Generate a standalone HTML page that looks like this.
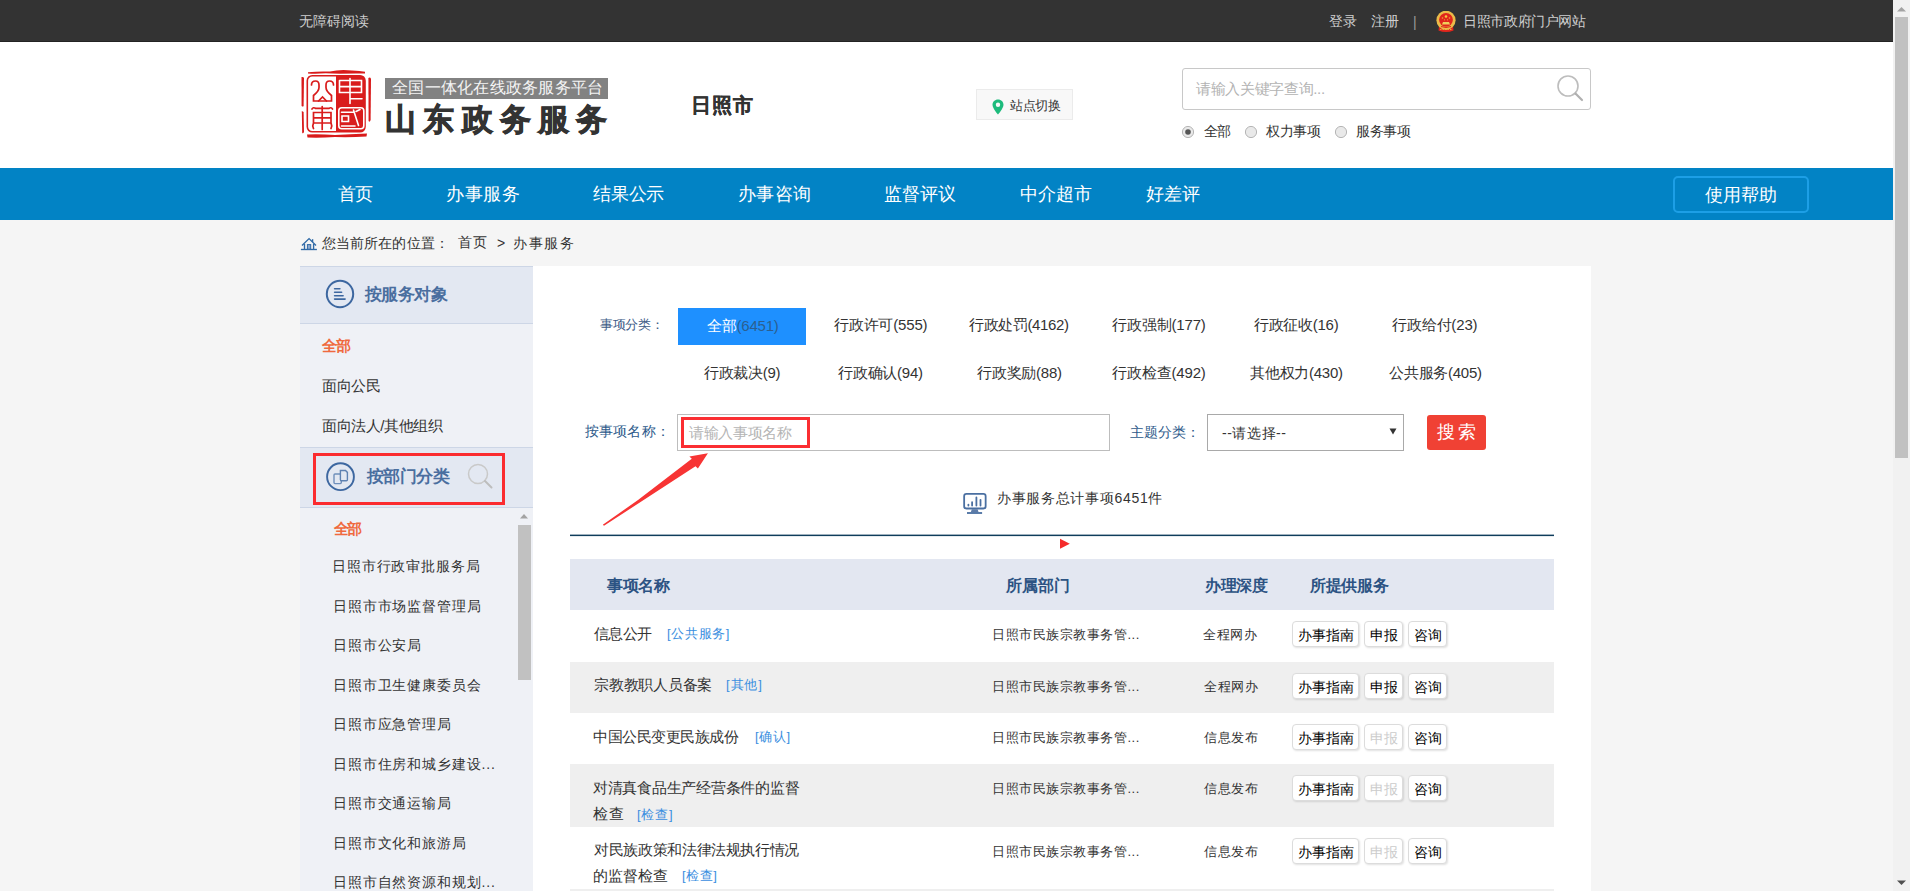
<!DOCTYPE html>
<html><head><meta charset="utf-8"><title>山东政务服务</title>
<style>
*{margin:0;padding:0;box-sizing:border-box}
html,body{width:1910px;height:891px;overflow:hidden;background:#f5f5f5}
body{font-family:"Liberation Sans",sans-serif;font-size:14px;color:#333;position:relative}
.b{position:absolute}
.t{position:absolute;white-space:nowrap;line-height:1}
.c{text-align:center}
.btn{position:absolute;height:26px;border:1px solid #dcdcdc;border-radius:4px;background:#fff;box-shadow:1px 1px 2px rgba(0,0,0,.12);font-size:14px;line-height:26px;text-align:center;white-space:nowrap}
</style></head><body>
<div class="b" style="left:0px;top:0px;width:1893px;height:42px;background:#333;border-bottom:1px solid #232323"></div>
<div class="b" style="left:0px;top:42px;width:1893px;height:126px;background:#fff"></div>
<div class="b" style="left:0px;top:168px;width:1893px;height:52px;background:#0283c5"></div>
<div class="t" style="left:299px;top:14px;font-size:14px;color:#cfcfcf;font-weight:normal;letter-spacing:0.0px;">无障碍阅读</div>
<div class="t" style="left:1329px;top:14px;font-size:14px;color:#cfcfcf;font-weight:normal;letter-spacing:-0.3px;">登录</div>
<div class="t" style="left:1371px;top:14px;font-size:14px;color:#cfcfcf;font-weight:normal;letter-spacing:0.4px;">注册</div>
<div class="t" style="left:1413px;top:15px;font-size:14px;color:#9a9a9a;font-weight:normal;">|</div>
<div class="t" style="left:1463px;top:14px;font-size:14px;color:#cfcfcf;font-weight:normal;letter-spacing:-0.375px;">日照市政府门户网站</div>
<svg class="b" style="left:1436px;top:10.6px" width="21" height="22" viewBox="0 0 21 22">
<path d="M3 15 Q10 20.5 17 15 L17.5 19.5 Q10 22.5 2.5 19.5Z" fill="#e0261c"/>
<path d="M4 18.5 H16" stroke="#f0c040" stroke-width=".8" stroke-dasharray="1.5 1"/>
<circle cx="10" cy="9.3" r="9.6" fill="#ecbb48"/><circle cx="10" cy="8.8" r="6.9" fill="#e0261c"/>
<path d="M6 13.5 L7 11 H13 L14 13.5Z" fill="#f0cf5a"/><path d="M5 15.5 Q10 17.5 15 15.5" stroke="#e0261c" stroke-width="1" fill="none"/>
<circle cx="10" cy="5.5" r="1.3" fill="#f5c840"/><circle cx="6.5" cy="7" r=".8" fill="#f0a838"/><circle cx="13.5" cy="7" r=".8" fill="#f0a838"/><circle cx="8.5" cy="8.8" r=".6" fill="#f0a838"/><circle cx="11.5" cy="8.8" r=".6" fill="#f0a838"/></svg>
<svg class="b" style="left:300px;top:68px" width="72" height="72" viewBox="0 0 72 72">
<g fill="#d91a1a">
<path d="M8 4.2 Q20 3 30 3.6 Q40 1.2 52 2.6 Q60 3 65 3.8 L65 5.6 Q50 5.4 40 5.8 Q28 5 20 5.4 Q12 5.8 8 5.6Z"/>
<path d="M1.5 9 Q3.5 8.5 4 10 L3.6 38 Q2.8 39 1.6 38Z"/><path d="M1.8 43 L3.6 44 L4 64 Q3 66 2.2 65Z"/>
<path d="M68.4 10 Q70 9 71 10.5 L70.6 52 Q69.6 55 68.6 53Z"/>
<path d="M7 66.5 Q20 66 35 67 Q50 66 67 65.5 L66.5 68.5 Q50 69.5 35 69 Q20 70 7.5 69.5Z"/>
</g>
<rect x="7.3" y="7.7" width="57.7" height="56.1" rx="5" fill="#fff" stroke="#d91c1c" stroke-width="1.6"/>
<path d="M36 7.7 H60 Q65 7.7 65 12.7 V58.8 Q65 63.8 60 63.8 H36 Z" fill="#d91c1c"/>
<g fill="none" stroke="#d91c1c" stroke-width="1.7" stroke-linecap="round">
<path d="M11.5 17 Q11.5 13 15.5 13 Q19 13 19 17 V19.5 Q19 23 13.5 27.5 V33 H31.5 V27.5 Q26 23 26 19.5 V17 Q26 13 29.5 13 Q33.5 13 33.5 17"/>
<path d="M18.5 33 L22.5 29 L26.5 33"/>
<path d="M12 41 Q13.5 38.8 15.5 40.4 H29 Q31 38.8 32.5 41"/>
<path d="M13.5 44.5 H31 V55 H13.5 Z M13.5 49.8 H31 M22.2 38.5 V61.5 M13.5 55 Q12 58 13.5 60.5 M31 55 Q32.5 58 31 60.5"/>
</g>
<g fill="none" stroke="#fff" stroke-width="1.6" stroke-linecap="round">
<path d="M39.5 12.5 V24.5 H61.5 V12.5 H39.5 M39.5 18.6 H61.5 M50 10.5 V35.5 M50 30.7 H62"/>
<rect x="38.8" y="39.8" width="25" height="21" rx="3"/>
<path d="M41.5 44.2 H53 M42 48 H48.5 V53.5 H42 Z M53.5 42 L58.5 57.5 M56 43.5 L60 41.5 M41.5 58 H55"/>
</g></svg>
<div class="b" style="left:385px;top:78px;width:223px;height:21px;background:#828282"></div>
<div class="t" style="left:392px;top:80px;font-size:16px;color:#f4f4f4;font-weight:normal;letter-spacing:0.25px;">全国一体化在线政务服务平台</div>
<div class="t" style="left:385px;top:104px;font-size:31px;color:#333;font-weight:bold;letter-spacing:7.3px;-webkit-text-stroke:0.8px #333;">山东政务服务</div>
<div class="t" style="left:691px;top:95px;font-size:20px;color:#333;font-weight:bold;letter-spacing:1.0px;-webkit-text-stroke:0.3px #333;">日照市</div>
<div class="b" style="left:976px;top:89px;width:97px;height:31px;background:#f8f8f8;border:1px solid #ebebeb"></div>
<svg class="b" style="left:991.5px;top:98.7px" width="12" height="16" viewBox="0 0 12 16"><path d="M6 0.5 C2.8 .5 .5 2.9 .5 5.8 C.5 9.6 6 15.5 6 15.5 C6 15.5 11.5 9.6 11.5 5.8 C11.5 2.9 9.2 .5 6 .5Z M6 3.6 A2.2 2.2 0 1 1 6 8 A2.2 2.2 0 1 1 6 3.6Z" fill="#1dbb7c" fill-rule="evenodd"/></svg>
<div class="t" style="left:1010px;top:99px;font-size:13px;color:#333;font-weight:normal;letter-spacing:-0.267px;">站点切换</div>
<div class="b" style="left:1182px;top:68px;width:409px;height:42px;background:#fff;border:1px solid #c8c8c8;border-radius:3px"></div>
<div class="t" style="left:1196px;top:81px;font-size:15px;color:#b3b3b3;font-weight:normal;letter-spacing:-0.34px;">请输入关键字查询...</div>
<svg class="b" style="left:1555px;top:73px" width="30" height="30" viewBox="0 0 30 30"><circle cx="13" cy="13" r="10" fill="none" stroke="#bdbdbd" stroke-width="1.6"/><path d="M20.5 20.5 L27 27" stroke="#b0b0b0" stroke-width="2.2" stroke-linecap="round"/></svg>
<svg class="b" style="left:1181px;top:125px" width="14" height="14" viewBox="0 0 14 14"><circle cx="7" cy="7" r="5.6" fill="#e9e9e9" stroke="#b5b5b5" stroke-width="1"/><circle cx="7" cy="7" r="2.8" fill="#555"/></svg>
<div class="t" style="left:1204px;top:124px;font-size:14px;color:#333;font-weight:normal;letter-spacing:-1.0px;">全部</div>
<svg class="b" style="left:1244px;top:125px" width="14" height="14" viewBox="0 0 14 14"><circle cx="7" cy="7" r="5.6" fill="#e9e9e9" stroke="#b5b5b5" stroke-width="1"/></svg>
<div class="t" style="left:1266px;top:124px;font-size:14px;color:#333;font-weight:normal;letter-spacing:-0.4px;">权力事项</div>
<svg class="b" style="left:1334px;top:125px" width="14" height="14" viewBox="0 0 14 14"><circle cx="7" cy="7" r="5.6" fill="#e9e9e9" stroke="#b5b5b5" stroke-width="1"/></svg>
<div class="t" style="left:1356px;top:124px;font-size:14px;color:#333;font-weight:normal;letter-spacing:-0.267px;">服务事项</div>
<div class="t" style="left:338px;top:185px;font-size:18px;color:#fff;font-weight:normal;letter-spacing:-0.7px;">首页</div>
<div class="t" style="left:446px;top:185px;font-size:18px;color:#fff;font-weight:normal;letter-spacing:0.567px;">办事服务</div>
<div class="t" style="left:593px;top:185px;font-size:18px;color:#fff;font-weight:normal;letter-spacing:-0.2px;">结果公示</div>
<div class="t" style="left:738px;top:185px;font-size:18px;color:#fff;font-weight:normal;letter-spacing:0.4px;">办事咨询</div>
<div class="t" style="left:884px;top:185px;font-size:18px;color:#fff;font-weight:normal;letter-spacing:0.067px;">监督评议</div>
<div class="t" style="left:1020px;top:185px;font-size:18px;color:#fff;font-weight:normal;letter-spacing:-0.1px;">中介超市</div>
<div class="t" style="left:1146px;top:185px;font-size:18px;color:#fff;font-weight:normal;letter-spacing:0.0px;">好差评</div>
<div class="b" style="left:1673px;top:176px;width:136px;height:37px;border:2px solid #1d9fe6;border-radius:5px"></div>
<div class="t" style="left:1705px;top:186px;font-size:18px;color:#fff;font-weight:normal;letter-spacing:0.0px;">使用帮助</div>
<svg class="b" style="left:296px;top:230px" width="26" height="24" viewBox="0 0 26 24"><g fill="none" stroke="#2f69a6" stroke-width="1.35"><path d="M6 15.6 L13.06 8.6 L20 15.6"/><path d="M16.6 9.2 V12"/><path d="M8.5 14 V19 M17.6 14 V19"/><path d="M4.9 19.5 H20.9"/></g><rect x="11.4" y="14.6" width="3.3" height="4.6" fill="#8eaad0" stroke="#2f69a6" stroke-width="1"/></svg>
<div class="t" style="left:322px;top:236px;font-size:14px;color:#333;font-weight:normal;letter-spacing:0.087px;">您当前所在的位置：</div>
<div class="t" style="left:458px;top:235px;font-size:14px;color:#333;font-weight:normal;letter-spacing:1.0px;">首页</div>
<div class="t" style="left:497px;top:236px;font-size:14px;color:#333;font-weight:normal;">&gt;</div>
<div class="t" style="left:513px;top:236px;font-size:14px;color:#333;font-weight:normal;letter-spacing:1.5px;">办事服务</div>
<div class="b" style="left:300px;top:266px;width:233px;height:625px;background:#eff1f6"></div>
<div class="b" style="left:300px;top:266px;width:233px;height:58px;background:#e3e8f2;border-top:1px solid #cdd6e6;border-bottom:1px solid #cdd6e6"></div>
<svg class="b" style="left:325px;top:279px" width="30" height="30" viewBox="0 0 30 30"><circle cx="15" cy="15" r="13.2" fill="none" stroke="#3d67a0" stroke-width="2"/><path d="M9.6 9.8 H14.9 M9.6 13.2 H16.6 M9.6 16.7 H18.1 M9.6 20.1 H20.1" stroke="#3d67a0" stroke-width="1.6" stroke-linecap="round"/></svg>
<div class="t" style="left:365px;top:286px;font-size:17px;color:#4a6e9f;font-weight:bold;letter-spacing:-0.6px;">按服务对象</div>
<div class="t" style="left:322px;top:338px;font-size:15px;color:#ef6a3e;font-weight:bold;letter-spacing:-1.2px;">全部</div>
<div class="t" style="left:322px;top:378px;font-size:15px;color:#333;font-weight:normal;letter-spacing:-0.5px;">面向公民</div>
<div class="t" style="left:322px;top:418px;font-size:15px;color:#333;font-weight:normal;letter-spacing:-0.438px;">面向法人/其他组织</div>
<div class="b" style="left:300px;top:447px;width:233px;height:61px;background:#e3e8f2;border-top:1px solid #cdd6e6;border-bottom:1px solid #cdd6e6"></div>
<svg class="b" style="left:325px;top:462px" width="30" height="30" viewBox="0 0 30 30"><circle cx="15.5" cy="14.7" r="13.4" fill="none" stroke="#3d67a0" stroke-width="1.9"/><rect x="9" y="12" width="7.3" height="9.6" rx="1" fill="none" stroke="#6f8fbb" stroke-width="1.4"/><path d="M15.4 8.5 H20.5 L22.4 10.4 V17.8 Q22.4 18.8 21.4 18.8 H16.4 Q15.4 18.8 15.4 17.8 Z" fill="#e3e8f2" stroke="#5f82b2" stroke-width="1.4"/></svg>
<div class="t" style="left:367px;top:468px;font-size:17px;color:#4a6e9f;font-weight:bold;letter-spacing:-0.55px;">按部门分类</div>
<svg class="b" style="left:466px;top:462px" width="28" height="28" viewBox="0 0 28 28"><circle cx="12" cy="12" r="9.5" fill="none" stroke="#c9c9c9" stroke-width="1.5"/><path d="M19 19 L25.5 25.5" stroke="#bdbdbd" stroke-width="2" stroke-linecap="round"/></svg>
<div class="b" style="left:313px;top:453px;width:192px;height:52px;border:3px solid #fb2b2f"></div>
<div class="t" style="left:334px;top:521px;font-size:15px;color:#ef6a3e;font-weight:bold;letter-spacing:-1.7px;">全部</div>
<div class="t" style="left:332px;top:559px;font-size:14px;color:#333;font-weight:normal;letter-spacing:0.856px;">日照市行政审批服务局</div>
<div class="t" style="left:333px;top:599px;font-size:14px;color:#333;font-weight:normal;letter-spacing:0.856px;">日照市市场监督管理局</div>
<div class="t" style="left:333px;top:638px;font-size:14px;color:#333;font-weight:normal;letter-spacing:0.856px;">日照市公安局</div>
<div class="t" style="left:333px;top:678px;font-size:14px;color:#333;font-weight:normal;letter-spacing:0.856px;">日照市卫生健康委员会</div>
<div class="t" style="left:333px;top:717px;font-size:14px;color:#333;font-weight:normal;letter-spacing:0.856px;">日照市应急管理局</div>
<div class="t" style="left:333px;top:757px;font-size:14px;color:#333;font-weight:normal;letter-spacing:0.856px;">日照市住房和城乡建设...</div>
<div class="t" style="left:333px;top:796px;font-size:14px;color:#333;font-weight:normal;letter-spacing:0.856px;">日照市交通运输局</div>
<div class="t" style="left:333px;top:836px;font-size:14px;color:#333;font-weight:normal;letter-spacing:0.856px;">日照市文化和旅游局</div>
<div class="t" style="left:333px;top:875px;font-size:14px;color:#333;font-weight:normal;letter-spacing:0.856px;">日照市自然资源和规划...</div>
<div class="b" style="left:516px;top:508px;width:17px;height:383px;background:#eff1f6"></div>
<svg class="b" style="left:519px;top:513px" width="10" height="6" viewBox="0 0 10 6"><path d="M1 5.5 L5 1 L9 5.5Z" fill="#a3a3a3"/></svg>
<div class="b" style="left:518px;top:525px;width:13px;height:155px;background:#c1c1c1"></div>
<div class="b" style="left:533px;top:266px;width:1058px;height:625px;background:#fff"></div>
<div class="t" style="left:600px;top:318px;font-size:13px;color:#3d5b86;font-weight:normal;letter-spacing:-0.325px;">事项分类：</div>
<div class="b" style="left:678px;top:308px;width:128px;height:37px;background:#1e90ff"></div>
<div class="t" style="left:707px;top:318px;font-size:15px;color:#333;font-weight:normal;letter-spacing:-0.229px;"><span style="color:#fff">全部</span><span style="color:#2c5f90">(6451)</span></div>
<div class="t" style="left:834px;top:317px;font-size:15px;color:#333;font-weight:normal;letter-spacing:-0.175px;">行政许可(555)</div>
<div class="t" style="left:969px;top:317px;font-size:15px;color:#333;font-weight:normal;letter-spacing:-0.378px;">行政处罚(4162)</div>
<div class="t" style="left:1112px;top:317px;font-size:15px;color:#333;font-weight:normal;letter-spacing:-0.15px;">行政强制(177)</div>
<div class="t" style="left:1254px;top:317px;font-size:15px;color:#333;font-weight:normal;letter-spacing:-0.286px;">行政征收(16)</div>
<div class="t" style="left:1392px;top:317px;font-size:15px;color:#333;font-weight:normal;letter-spacing:-0.157px;">行政给付(23)</div>
<div class="t" style="left:704px;top:365px;font-size:15px;color:#333;font-weight:normal;letter-spacing:-0.317px;">行政裁决(9)</div>
<div class="t" style="left:838px;top:365px;font-size:15px;color:#333;font-weight:normal;letter-spacing:-0.243px;">行政确认(94)</div>
<div class="t" style="left:977px;top:365px;font-size:15px;color:#333;font-weight:normal;letter-spacing:-0.243px;">行政奖励(88)</div>
<div class="t" style="left:1112px;top:365px;font-size:15px;color:#333;font-weight:normal;letter-spacing:-0.15px;">行政检查(492)</div>
<div class="t" style="left:1250px;top:365px;font-size:15px;color:#333;font-weight:normal;letter-spacing:-0.25px;">其他权力(430)</div>
<div class="t" style="left:1389px;top:365px;font-size:15px;color:#333;font-weight:normal;letter-spacing:-0.25px;">公共服务(405)</div>
<div class="t" style="left:585px;top:424px;font-size:14px;color:#2d5a8a;font-weight:normal;letter-spacing:0.16px;">按事项名称：</div>
<div class="b" style="left:677px;top:414px;width:433px;height:37px;border:1px solid #bdbdbd"></div>
<div class="t" style="left:689px;top:425px;font-size:15px;color:#b5b5b5;font-weight:normal;letter-spacing:-0.35px;">请输入事项名称</div>
<div class="b" style="left:681px;top:417px;width:129px;height:31px;border:3px solid #fb2e32"></div>
<svg class="b" style="left:560px;top:440px" width="160" height="100" viewBox="560 440 160 100"><path d="M602.8 524.8 L638 500 L691.8 458.7 L689.4 456.4 L707.9 453.2 L697.9 468.6 L695.5 466.2 L604 525.8 Z" fill="#f73434"/></svg>
<div class="t" style="left:1130px;top:425px;font-size:14px;color:#2d5a8a;font-weight:normal;letter-spacing:0.075px;">主题分类：</div>
<div class="b" style="left:1207px;top:414px;width:197px;height:37px;border:1px solid #a9a9a9;background:#fff"></div>
<div class="t" style="left:1222px;top:426px;font-size:14px;color:#333;font-weight:normal;letter-spacing:0.55px;">--请选择--</div>
<svg class="b" style="left:1389px;top:428px" width="8" height="7" viewBox="0 0 8 7"><path d="M.5 .5 H7.5 L4 6.5Z" fill="#333"/></svg>
<div class="b" style="left:1427px;top:415px;width:59px;height:35px;background:#f04134;border-radius:3px"></div>
<div class="t" style="left:1437px;top:423px;font-size:18px;color:#fff;font-weight:normal;letter-spacing:0.3px;">搜</div>
<div class="t" style="left:1458px;top:423px;font-size:18px;color:#fff;font-weight:normal;letter-spacing:0.5px;">索</div>
<svg class="b" style="left:955px;top:485px" width="40" height="35" viewBox="0 0 40 35"><rect x="9.15" y="8.9" width="21.5" height="14.6" rx="2.3" fill="none" stroke="#4a6fa1" stroke-width="1.8"/><g stroke="#4a6fa1" stroke-width="1.8" stroke-linecap="round"><path d="M13.4 19.6 V20.6 M17.1 17.2 V20.6 M21.4 12.5 V20.6 M25.5 14.8 V20.6"/></g><path d="M16.8 24.2 H22.6 L23.6 27.3 H15.8Z" fill="#5d7ba8"/><rect x="12" y="27.1" width="15.1" height="1.8" fill="#4a6fa1"/></svg>
<div class="t" style="left:997px;top:491px;font-size:14px;color:#333;font-weight:normal;letter-spacing:0.692px;">办事服务总计事项6451件</div>
<svg class="b" style="left:570px;top:530px" width="984" height="10"><rect x="0" y="4.6" width="984" height="1.5" fill="#0f3d5c"/></svg>
<svg class="b" style="left:1059px;top:538px" width="12" height="12" viewBox="0 0 12 12"><path d="M1 .8 L10.8 5.8 L1 10.8Z" fill="#f52b2b"/></svg>
<div class="b" style="left:570px;top:559px;width:984px;height:51px;background:#e3e7f1"></div>
<div class="t" style="left:607px;top:578px;font-size:16px;color:#2c5383;font-weight:bold;letter-spacing:-0.367px;">事项名称</div>
<div class="t" style="left:1006px;top:578px;font-size:16px;color:#2c5383;font-weight:bold;letter-spacing:-0.033px;">所属部门</div>
<div class="t" style="left:1205px;top:578px;font-size:16px;color:#2c5383;font-weight:bold;letter-spacing:-0.433px;">办理深度</div>
<div class="t" style="left:1310px;top:578px;font-size:16px;color:#2c5383;font-weight:bold;letter-spacing:-0.325px;">所提供服务</div>
<div class="b" style="left:570px;top:610px;width:984px;height:52px;background:#fff"></div>
<div class="t" style="left:594px;top:626px;font-size:15px;color:#333;font-weight:normal;letter-spacing:-0.533px;">信息公开</div>
<div class="t" style="left:667px;top:627px;font-size:13px;color:#3a8ee0;font-weight:normal;letter-spacing:0.64px;">[公共服务]</div>
<div class="t" style="left:992px;top:628px;font-size:13px;color:#333;font-weight:normal;letter-spacing:0.542px;">日照市民族宗教事务管...</div>
<div class="t" style="left:1203px;top:628px;font-size:13px;color:#333;font-weight:normal;letter-spacing:0.633px;">全程网办</div>
<div class="btn" style="left:1292px;top:621px;width:67px;color:#000">办事指南</div>
<div class="btn" style="left:1364px;top:621px;width:39px;color:#000">申报</div>
<div class="btn" style="left:1408px;top:621px;width:39px;color:#000">咨询</div>
<div class="b" style="left:570px;top:662px;width:984px;height:51px;background:#efefef"></div>
<div class="t" style="left:594px;top:677px;font-size:15px;color:#333;font-weight:normal;letter-spacing:-0.229px;">宗教教职人员备案</div>
<div class="t" style="left:726px;top:678px;font-size:13px;color:#3a8ee0;font-weight:normal;letter-spacing:0.9px;">[其他]</div>
<div class="t" style="left:992px;top:680px;font-size:13px;color:#333;font-weight:normal;letter-spacing:0.542px;">日照市民族宗教事务管...</div>
<div class="t" style="left:1204px;top:680px;font-size:13px;color:#333;font-weight:normal;letter-spacing:0.633px;">全程网办</div>
<div class="btn" style="left:1292px;top:673px;width:67px;color:#000">办事指南</div>
<div class="btn" style="left:1364px;top:673px;width:39px;color:#000">申报</div>
<div class="btn" style="left:1408px;top:673px;width:39px;color:#000">咨询</div>
<div class="b" style="left:570px;top:713px;width:984px;height:51px;background:#fff"></div>
<div class="t" style="left:593px;top:729px;font-size:15px;color:#333;font-weight:normal;letter-spacing:-0.467px;">中国公民变更民族成份</div>
<div class="t" style="left:755px;top:730px;font-size:13px;color:#3a8ee0;font-weight:normal;letter-spacing:0.667px;">[确认]</div>
<div class="t" style="left:992px;top:731px;font-size:13px;color:#333;font-weight:normal;letter-spacing:0.542px;">日照市民族宗教事务管...</div>
<div class="t" style="left:1204px;top:731px;font-size:13px;color:#333;font-weight:normal;letter-spacing:0.633px;">信息发布</div>
<div class="btn" style="left:1292px;top:724px;width:67px;color:#000">办事指南</div>
<div class="btn" style="left:1364px;top:724px;width:39px;color:#ccc">申报</div>
<div class="btn" style="left:1408px;top:724px;width:39px;color:#000">咨询</div>
<div class="b" style="left:570px;top:764px;width:984px;height:63px;background:#efefef"></div>
<div class="t" style="left:593px;top:780px;font-size:15px;color:#333;font-weight:normal;letter-spacing:-0.262px;">对清真食品生产经营条件的监督</div>
<div class="t" style="left:593px;top:806px;font-size:15px;color:#333;font-weight:normal;letter-spacing:0.7px;">检查</div>
<div class="t" style="left:637px;top:808px;font-size:13px;color:#3a8ee0;font-weight:normal;letter-spacing:0.8px;">[检查]</div>
<div class="t" style="left:992px;top:782px;font-size:13px;color:#333;font-weight:normal;letter-spacing:0.542px;">日照市民族宗教事务管...</div>
<div class="t" style="left:1204px;top:782px;font-size:13px;color:#333;font-weight:normal;letter-spacing:0.633px;">信息发布</div>
<div class="btn" style="left:1292px;top:775px;width:67px;color:#000">办事指南</div>
<div class="btn" style="left:1364px;top:775px;width:39px;color:#ccc">申报</div>
<div class="btn" style="left:1408px;top:775px;width:39px;color:#000">咨询</div>
<div class="b" style="left:570px;top:827px;width:984px;height:62px;background:#fff"></div>
<div class="t" style="left:594px;top:842px;font-size:15px;color:#333;font-weight:normal;letter-spacing:-0.354px;">对民族政策和法律法规执行情况</div>
<div class="t" style="left:593px;top:868px;font-size:15px;color:#333;font-weight:normal;letter-spacing:0.05px;">的监督检查</div>
<div class="t" style="left:682px;top:869px;font-size:13px;color:#3a8ee0;font-weight:normal;letter-spacing:0.533px;">[检查]</div>
<div class="t" style="left:992px;top:845px;font-size:13px;color:#333;font-weight:normal;letter-spacing:0.542px;">日照市民族宗教事务管...</div>
<div class="t" style="left:1204px;top:845px;font-size:13px;color:#333;font-weight:normal;letter-spacing:0.633px;">信息发布</div>
<div class="btn" style="left:1292px;top:838px;width:67px;color:#000">办事指南</div>
<div class="btn" style="left:1364px;top:838px;width:39px;color:#ccc">申报</div>
<div class="btn" style="left:1408px;top:838px;width:39px;color:#000">咨询</div>
<div class="b" style="left:570px;top:889px;width:984px;height:2px;background:#efefef"></div>
<div class="b" style="left:1893px;top:0px;width:17px;height:891px;background:#f1f1f1"></div>
<div class="b" style="left:1895px;top:17px;width:13px;height:441px;background:#c1c1c1"></div>
<svg class="b" style="left:1896px;top:6px" width="11" height="6" viewBox="0 0 11 6"><path d="M1 5.5 L5.5 1 L10 5.5Z" fill="#a3a3a3"/></svg>
<svg class="b" style="left:1896px;top:880px" width="11" height="6" viewBox="0 0 11 6"><path d="M1 .5 L5.5 5 L10 .5Z" fill="#505050"/></svg>
</body></html>
